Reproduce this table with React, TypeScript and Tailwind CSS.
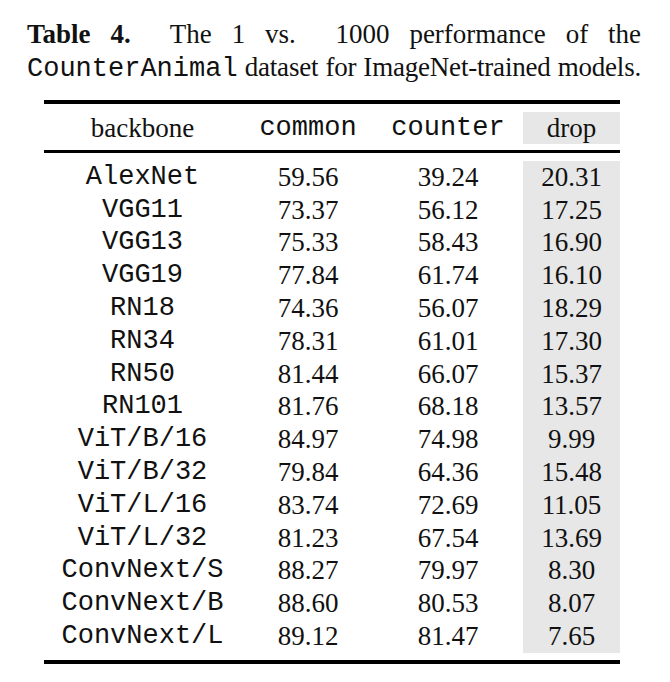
const rows: [string, string, string, string][] = [
  ['AlexNet', '59.56', '39.24', '20.31'],
  ['VGG11', '73.37', '56.12', '17.25'],
  ['VGG13', '75.33', '58.43', '16.90'],
  ['VGG19', '77.84', '61.74', '16.10'],
  ['RN18', '74.36', '56.07', '18.29'],
  ['RN34', '78.31', '61.01', '17.30'],
  ['RN50', '81.44', '66.07', '15.37'],
  ['RN101', '81.76', '68.18', '13.57'],
  ['ViT/B/16', '84.97', '74.98', '9.99'],
  ['ViT/B/32', '79.84', '64.36', '15.48'],
  ['ViT/L/16', '83.74', '72.69', '11.05'],
  ['ViT/L/32', '81.23', '67.54', '13.69'],
  ['ConvNext/S', '88.27', '79.97', '8.30'],
  ['ConvNext/B', '88.60', '80.53', '8.07'],
  ['ConvNext/L', '89.12', '81.47', '7.65'],
];

const serif = "font-['Liberation_Serif',serif]";
const mono = "font-['Liberation_Mono',monospace]";
const cols = 'grid grid-cols-[197px_134px_146px_2px_97px] items-stretch';

export default function App() {
  return (
    <div className={`w-[670px] h-[682px] bg-white text-[#111] ${serif} text-[27px]`}>
      <div className="pt-[18px] pl-[27px] w-[641px] leading-[33px]">
        <p className="text-justify [text-align-last:justify] whitespace-nowrap">
          <span className="font-bold">Table 4.</span>&nbsp; The 1 vs.&nbsp; 1000 performance of the
        </p>
        <p className="text-justify [text-align-last:justify] whitespace-nowrap tracking-[-0.2px]">
          <span className={`${mono} tracking-normal`}>CounterAnimal</span>&nbsp;dataset for ImageNet-trained models.
        </p>
      </div>

      <div className="ml-[44px] w-[576px] mt-[14px] leading-none">
        <div className="h-[4px] bg-black" />
        <div className={`${cols} mt-[8px] h-[32px]`}>
          <div className="flex items-center justify-center">backbone</div>
          <div className={`flex items-center justify-center ${mono}`}>common</div>
          <div className={`flex items-center justify-center ${mono}`}>counter</div>
          <div />
          <div className="flex items-center justify-center bg-[#e7e7e7]">drop</div>
        </div>
        <div className="h-[3px] bg-black mt-[6px]" />
        <div className="mt-[8px]">
          {rows.map(([name, common, counter, drop]) => (
            <div key={name} className={`${cols} h-[32.8px]`}>
              <div className={`flex items-center justify-center ${mono}`}>{name}</div>
              <div className="flex items-center justify-center">{common}</div>
              <div className="flex items-center justify-center">{counter}</div>
              <div />
              <div className="flex items-center justify-center bg-[#e7e7e7]">{drop}</div>
            </div>
          ))}
        </div>
        <div className="h-[4px] bg-black mt-[7px]" />
      </div>
    </div>
  );
}
